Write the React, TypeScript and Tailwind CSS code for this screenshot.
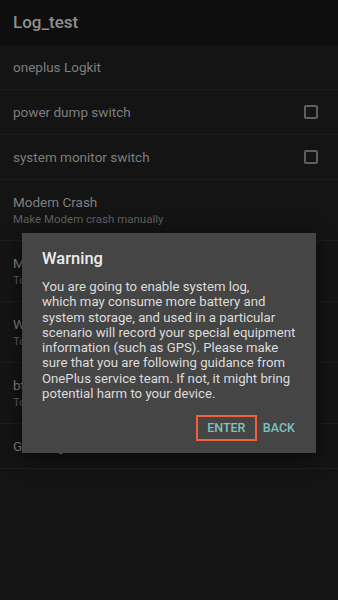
import { Fragment } from 'react';

const rows = [
  { title: 'oneplus Logkit' },
  { title: 'power dump switch', check: true },
  { title: 'system monitor switch', check: true },
  { title: 'Modem Crash', sub: 'Make Modem crash manually' },
  { title: 'Modem Log', sub: 'Touch to set modem log' },
  { title: 'Wifi Log', sub: 'Touch to set wifi log' },
  { title: 'bt Log', sub: 'Touch to set bt log' },
  { title: 'GPS Log' },
];

const warning = [
  'You are going to enable system log,',
  'which may consume more battery and',
  'system storage, and used in a particular',
  'scenario will record your special equipment',
  'information (such as GPS). Please make',
  'sure that you are following guidance from',
  'OnePlus service team. If not, it might bring',
  'potential harm to your device.',
];

export default function App() {
  return (
    <div className="relative w-[338px] h-[600px] overflow-hidden bg-[#141414] font-['Roboto',sans-serif]">
      {/* Toolbar */}
      <div className="h-[45px] bg-[#0e0e0e] flex items-center px-[13px]">
        <span className="text-[17px] text-[#8f8f8f] font-medium">Log_test</span>
      </div>

      {/* Preference list */}
      <div className="flex flex-col">
        {rows.map((r) => (
          <Fragment key={r.title}>
            <div
              className={`flex items-center justify-between px-[13px] ${
                r.sub ? 'h-[60px]' : 'h-[44px]'
              }`}
            >
              <div className="flex flex-col">
                <span className="text-[13.5px] leading-[18px] text-[#7e7e7e]">{r.title}</span>
                {r.sub && (
                  <span className="text-[11.5px] leading-[16px] text-[#5e5e5e]">{r.sub}</span>
                )}
              </div>
              {r.check && (
                <div className="w-[14px] h-[14px] mr-[7px] border-2 border-[#5f5f5f] rounded-[2px]" />
              )}
            </div>
            <div className="h-px bg-[#1c1c1c]" />
          </Fragment>
        ))}
      </div>

      {/* Dialog */}
      <div className="absolute left-[22px] top-[233px] w-[294px] h-[220px] bg-[#454545] shadow-[0_4px_16px_rgba(0,0,0,0.6)] pt-[14px] pl-[20px] pr-[10px]">
        <h2 className="text-[16.5px] leading-[24px] font-medium text-[#ececec]">Warning</h2>
        <p className="mt-[8px] text-[13.2px] leading-[15.3px] text-[#dcdcdc] whitespace-nowrap">
          {warning.map((line, i) => (
            <Fragment key={i}>
              {line}
              {i < warning.length - 1 && <br />}
            </Fragment>
          ))}
        </p>
        <div className="absolute right-[15px] bottom-[12px] flex items-center">
          <button className="h-[26px] w-[61px] border-2 border-[#f0603a] text-[12.5px] font-medium text-[#7cc4bb]">
            ENTER
          </button>
          <button className="h-[26px] px-[6px] text-[12.5px] font-medium text-[#7cc4bb]">
            BACK
          </button>
        </div>
      </div>
    </div>
  );
}
